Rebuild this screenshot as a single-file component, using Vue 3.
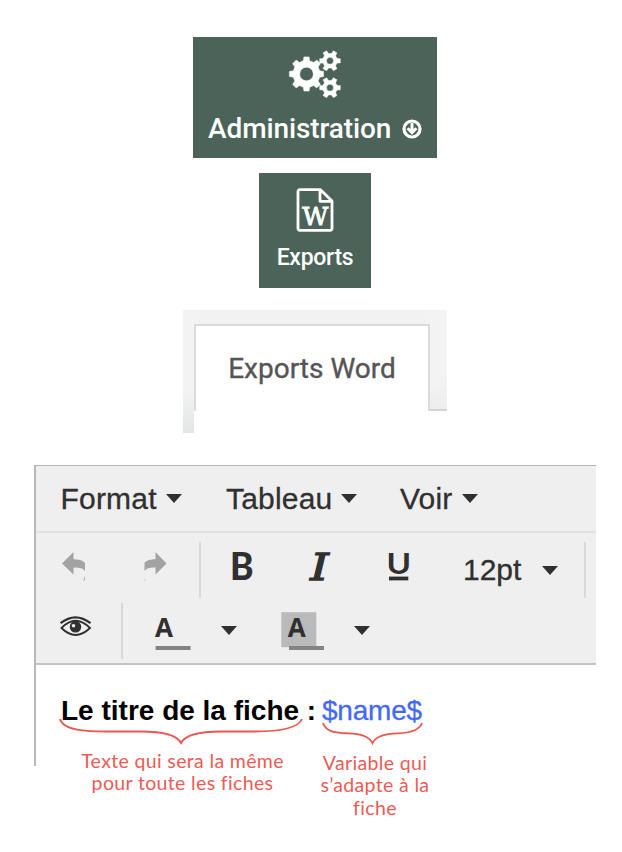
<script setup>
const gear = (cx, cy, outer, root, hole, teeth) => {
  const step = (Math.PI * 2) / teeth
  const pts = []
  const at = (r, a) => `${(cx + r * Math.cos(a)).toFixed(2)} ${(cy + r * Math.sin(a)).toFixed(2)}`
  for (let i = 0; i < teeth; i++) {
    const a = i * step
    pts.push(at(root, a - step * 0.3), at(outer, a - step * 0.19), at(outer, a + step * 0.19), at(root, a + step * 0.3))
  }
  return `M${pts.join('L')}Z M${cx - hole} ${cy}a${hole} ${hole} 0 1 0 ${hole * 2} 0a${hole} ${hole} 0 1 0 ${-hole * 2} 0Z`
}
const gears = [
  gear(17.5, 27, 17.3, 13.6, 6.8, 8),
  gear(41, 13.8, 10.5, 7.4, 3.5, 6),
  gear(41, 40.7, 10.5, 7.4, 3.5, 6),
]
const menus = [
  { name: 'Format', cls: 'format' },
  { name: 'Tableau', cls: 'tableau' },
  { name: 'Voir', cls: 'voir' },
]
</script>

<template>
  <main class="page">
    <section class="tile admin">
      <svg class="gears" width="54" height="54" viewBox="0 0 54 54">
        <path v-for="(d, i) in gears" :key="i" :d="d" fill="#fff" fill-rule="evenodd" stroke="#fff" stroke-width=".5" stroke-linejoin="round" />
      </svg>
      <div class="admin-row">
        <span class="admin-label">Administration</span>
        <svg width="20" height="20" viewBox="0 0 20 20" fill="none" stroke="#fff">
          <circle cx="10" cy="10" r="8" stroke-width="3.2" />
          <path d="M10 4v9M5.6 9.2l4.4 4.4 4.4-4.4" stroke-width="3" />
        </svg>
      </div>
    </section>

    <section class="tile exports">
      <svg class="doc" width="38" height="44" viewBox="0 0 38 44" fill="none" stroke="#fff">
        <path d="M4 1.7H24.5L36 13V40.3Q36 42.3 34 42.3H4Q2 42.3 2 40.3V3.7Q2 1.7 4 1.7ZM24 2V13.3H36" stroke-width="2.8" stroke-linejoin="round" />
        <text x="6.2" y="36.6" textLength="26" lengthAdjust="spacingAndGlyphs" class="doc-w">W</text>
      </svg>
      <span class="exports-label">Exports</span>
    </section>

    <section class="tabs">
      <div class="tabs-left"></div>
      <div class="tab">Exports Word</div>
      <div class="tabs-right"></div>
    </section>

    <section class="editor">
      <nav class="menubar">
        <div v-for="m in menus" :key="m.name" class="menu" :class="m.cls">
          <span>{{ m.name }}</span><i class="caret"></i>
        </div>
      </nav>
      <div class="toolbar">
        <div class="row">
          <svg class="undo" width="24" height="30" viewBox="0 0 24 30">
            <path d="M0 11.5L11.5 0V7.2C17 7.2 20.5 8.3 23 10.7V19C20.5 15.8 17 15.3 11.5 15.5V22.5ZM22.8 23.5V28L21.4 29Z" />
          </svg>
          <svg class="redo" width="24" height="30" viewBox="0 0 24 30">
            <path d="M22.5 11.5L11.5 0V7.2C6 7.2 3 8.3.5 10.7V19C3 15.8 6 15.3 11.5 15.5V22.5ZM.6 26.5V28L1.6 29Z" />
          </svg>
          <i class="sep sep-one"></i>
          <svg class="bold" width="24" height="30" viewBox="0 0 24 30">
            <text x="0" y="28.3" textLength="23.6" lengthAdjust="spacingAndGlyphs" class="g-bold">B</text>
          </svg>
          <svg class="italic" width="28" height="30" viewBox="0 0 28 30">
            <text x="3.2" y="28.3" textLength="18.5" lengthAdjust="spacingAndGlyphs" class="g-italic">I</text>
          </svg>
          <svg class="under" width="24" height="30" viewBox="0 0 24 30">
            <text x="-.6" y="21.6" textLength="24.6" lengthAdjust="spacingAndGlyphs" class="g-under">U</text>
            <rect x="2" y="24.6" width="19.3" height="3.8" />
          </svg>
          <span class="size">12pt</span>
          <i class="caret size-caret"></i>
          <i class="sep sep-two"></i>
        </div>
        <div class="row">
          <svg class="eye" width="32" height="22" viewBox="0 0 32 22">
            <path d="M.5 7.2Q15.5-4.5 30.5 7.2" stroke-width="2.2" />
            <path d="M1.5 12Q15.5-2.5 30 12Q15.5 26 1.5 12Z" stroke-width="1.8" />
            <circle cx="15.5" cy="10.8" r="5.8" class="pupil" />
            <circle cx="13.5" cy="9.8" r="1.8" class="glint" />
          </svg>
          <i class="sep sep-three"></i>
          <svg class="fore" width="36" height="40" viewBox="0 0 36 40">
            <text x="0" y="25.6" textLength="18" lengthAdjust="spacingAndGlyphs" class="g-a">A</text>
            <rect x=".6" y="35" width="35" height="4" fill="#838383" />
          </svg>
          <i class="caret fore-caret"></i>
          <svg class="back" width="44" height="40" viewBox="0 0 44 40">
            <rect x=".3" y="1.2" width="35" height="35" fill="#bababa" />
            <text x="6.8" y="25.6" textLength="18" lengthAdjust="spacingAndGlyphs" class="g-a">A</text>
            <rect x="8" y="35" width="35" height="4" fill="#838383" />
          </svg>
          <i class="caret back-caret"></i>
        </div>
      </div>
      <div class="content">
        <p class="line"><b>Le titre de la fiche :</b><span class="var">$name$</span></p>
        <div class="notes">
          <div class="note first">
            <svg width="244" height="28" viewBox="0 0 244 28">
              <path d="M1 0C4 11.5 28 12.5 48 12.5H82C103 12.5 118 16 122 24C126 16 141 12.5 162 12.5H196C222 12.5 239 9 243 0" />
            </svg>
            <p>Texte qui sera la même<br>pour toute les fiches</p>
          </div>
          <div class="note second">
            <svg width="102" height="24" viewBox="0 0 102 24">
              <path d="M1 0C4 10 17 10 26 10.3C38 10.5 47 12.5 50.5 20C54 12.5 64 10.5 76 10.3C87 10 97 8 100 0" />
            </svg>
            <p>Variable qui<br>s’adapte à la<br>fiche</p>
          </div>
        </div>
      </div>
    </section>
  </main>
</template>

<style>
body { background: #fff; }
</style>

<style scoped>
.page { width: 622px; height: 852px; box-sizing: border-box; padding-top: 37px; display: flex; flex-direction: column; overflow: hidden; font-family: "Liberation Sans", Arial, sans-serif; color: #303030; }
p { margin: 0; }
svg { display: block; flex: none; overflow: visible; }
.tile { background: #4b6358; color: #fff; font-family: Roboto, sans-serif; font-weight: 500; box-sizing: border-box; flex: none; display: flex; flex-direction: column; white-space: nowrap; }
.admin { width: 244px; height: 121px; margin-left: 193px; padding: 10px 0 0 15px; }
.gears { margin-left: 81px; }
.admin-row { display: flex; align-items: center; height: 34px; margin-top: 11px; }
.admin-label { font-size: 28px; width: 194px; letter-spacing: -.1px; line-height: 34px; }
.exports { width: 112px; height: 115px; margin: 15px 0 0 259px; align-items: center; padding-top: 15px; }
.doc-w { font: 25px "DejaVu Serif", serif; fill: #fff; stroke: #fff; stroke-width: .9px; }
.exports-label { font-size: 23px; letter-spacing: -.3px; line-height: 28px; margin-top: 12px; }
.tabs { flex: none; width: 264px; height: 123px; margin: 22px 0 0 183px; display: flex; align-items: flex-start; }
.tabs-left { width: 11px; height: 123px; background: linear-gradient(to bottom, #f3f3f3 65%, #e3e5e5); }
.tab { width: 236px; height: 87px; margin-top: 14px; box-sizing: border-box; border: 2px solid #d9dada; border-bottom: 0; background: #fff; box-shadow: 0 -14px #f2f2f2; display: flex; align-items: center; justify-content: center; font: 400 28px/34px Roboto, sans-serif; -webkit-text-stroke: .35px #555; color: #555; white-space: nowrap; }
.tabs-right { width: 17px; height: 101px; box-sizing: border-box; background: linear-gradient(to bottom, #f3f3f3 70%, #ededed); border-bottom: 2px solid #d3d4d4; }
.editor { flex: none; width: 562px; height: 301px; margin: 32px 0 0 34px; box-sizing: border-box; border-left: 2px solid #b9b9b9; border-top: 1px solid #b5b5b5; }
.menubar { height: 65px; background: #efefef; border-bottom: 2px solid #e1e1e1; display: flex; align-items: center; }
.menu { display: flex; align-items: center; box-sizing: border-box; font-size: 30px; letter-spacing: .2px; -webkit-text-stroke: .3px #303030; }
.format { width: 165px; padding-left: 24.5px; }
.tableau { width: 173px; padding-left: 25px; }
.voir { padding-left: 26px; }
.caret { flex: none; width: 0; height: 0; border: 8.3px solid transparent; border-top: 9px solid #303030; border-bottom: 0; }
.menu .caret { margin-left: 9px; }
.menu.tableau .caret { margin-left: 8.5px; }
.toolbar { box-sizing: border-box; height: 132px; background: #efefef; border-bottom: 2px solid #c3c3c3; padding-top: 9px; display: flex; flex-direction: column; gap: 5px; }
.row { height: 56px; display: flex; align-items: flex-start; }
.row svg { fill: #303030; }
.row svg.undo, .row svg.redo { fill: #a3a3a3; }
.row svg.eye { fill: none; stroke: #303030; }
.pupil { fill: #303030; stroke: none; }
.glint { fill: #efefef; stroke: none; }
.sep { flex: none; width: 2px; height: 56px; background: #d8d8d8; }
.undo { margin: 10px 0 0 26px; }
.redo { margin: 10px 0 0 58px; }
.sep-one { margin-left: 31px; }
.bold { margin: 10px 0 0 29px; }
.italic { margin: 10px 0 0 53px; }
.under { margin: 10px 0 0 52px; }
.g-bold { font: 900 37px Lato, sans-serif; }
.g-italic { font: italic 37px "DejaVu Serif", serif; stroke: #303030; stroke-width: 1.3px; }
.g-under { font: bold 29px Lato, sans-serif; }
.g-a { font: bold 26px "Open Sans", sans-serif; }
.size { font-size: 30px; line-height: 34px; width: 79px; margin: 11px 0 0 52px; -webkit-text-stroke: .3px #303030; }
.size-caret { margin-top: 23.5px; }
.sep-two { margin-left: 26px; }
.eye { margin: 13px 0 0 24px; }
.sep-three { margin-left: 29px; }
.fore { margin: 8px 0 0 32px; }
.fore-caret { margin: 23px 0 0 30px; }
.back { margin: 8px 0 0 44px; }
.back-caret { margin: 23px 0 0 28.5px; }
.content { height: 101px; }
.line { height: 54px; padding: 29px 0 0 25px; box-sizing: border-box; font-size: 28px; line-height: 34px; display: flex; color: #000; white-space: nowrap; }
.line b { width: 261px; }
.var { color: #4468fa; letter-spacing: -.2px; -webkit-text-stroke: .3px #4468fa; }
.notes { display: flex; align-items: flex-start; padding-left: 23px; }
.note svg { fill: none; stroke: #e9574f; stroke-width: 1.8; }
.note { color: #ec5b54; font: 19.5px/22.4px Lato, sans-serif; text-align: center; white-space: nowrap; letter-spacing: .35px; }
.first { width: 244px; }
.first p { padding: 3px 0 0 3px; }
.second { width: 102px; margin: 4px 0 0 19px; }
.second p { margin: 5px -10px 0 -6px; }
</style>
